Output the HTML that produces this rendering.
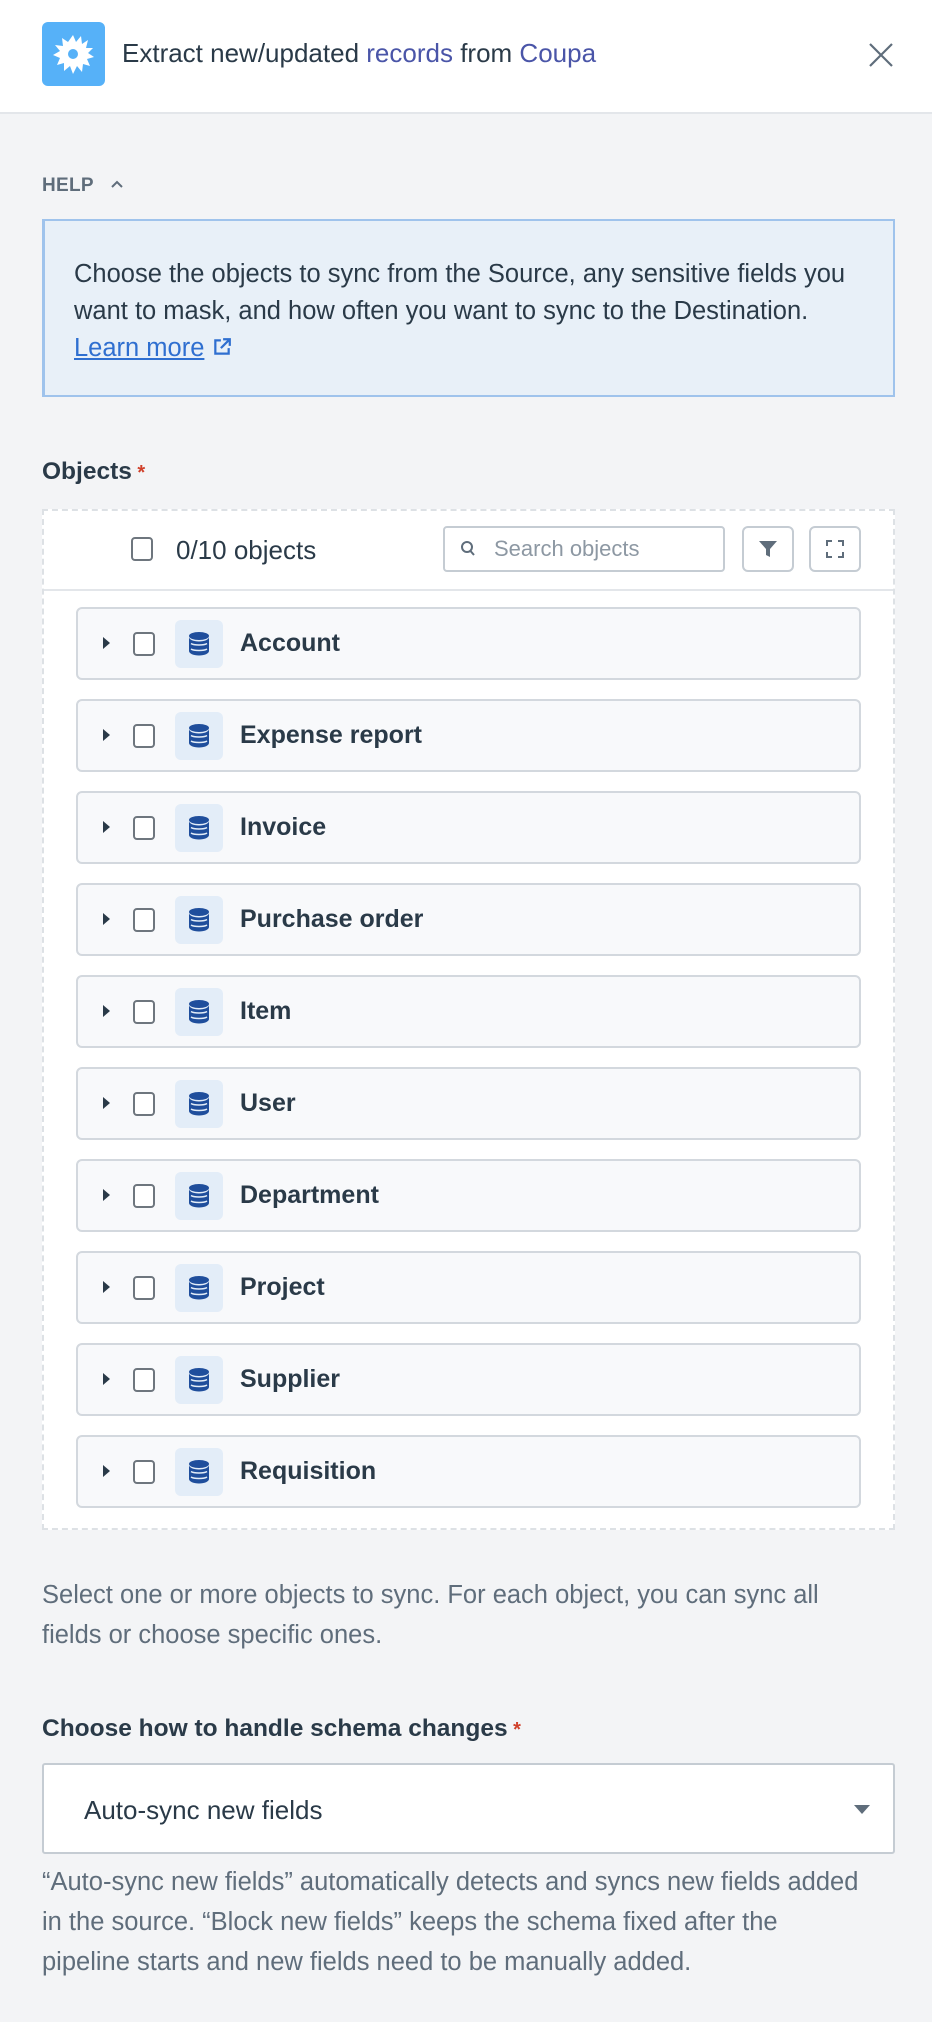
<!DOCTYPE html>
<html><head><meta charset="utf-8"><style>
*{box-sizing:border-box;margin:0;padding:0}
body{width:932px;height:2022px;background:#f3f4f6;font-family:"Liberation Sans",sans-serif;color:#2a3a48;position:relative;overflow:hidden}
.abs{position:absolute;white-space:nowrap}
.hdr{left:0;top:0;width:932px;height:114px;background:#fff;border-bottom:2px solid #e3e6ea}
.row{position:absolute;left:76px;width:785px;height:73px;background:#f8f9fb;border:2px solid #d3d8de;border-radius:6px}
.row .tri{position:absolute;left:25px;top:28px;width:0;height:0;border-left:7px solid #2a3a48;border-top:6px solid transparent;border-bottom:6px solid transparent}
.cb{position:absolute;width:22px;height:24px;border:2px solid #6e767e;border-radius:4px;background:#fff}
.row .cb{left:55px;top:23px}
.row .db{position:absolute;left:97px;top:11px;width:48px;height:48px;background:#e3edf8;border-radius:6px}
.row .db svg{position:absolute;left:13px;top:12px}
.row .lbl{position:absolute;left:162px;top:19px;font-size:25px;line-height:30px;font-weight:bold;color:#2a3a48}
.muted{color:#5f6d7b}
</style></head><body>
<div class="abs hdr"></div>
<div class="abs" style="left:42px;top:22px;width:63px;height:64px;background:#56b1f8;border-radius:6px">
<svg width="63" height="64" viewBox="0 0 63 64"><polygon fill="#fff" points="31,13 34,20 39,14 40,22 46,18 44,26 51,26 46,31 52,35 45,37 48,44 41,42 40,50 35,44 31,52 28,44 22,49 22,41 15,43 18,36 11,33 18,29 13,23 21,24 20,16 26,20" /><circle cx="31" cy="32" r="5" fill="#56b1f8"/></svg>
</div>
<div class="abs" style="left:122px;top:38px;font-size:26px;line-height:30px;color:#2a3a48">Extract new/updated <span style="color:#4a55a8">records</span> from <span style="color:#4a55a8">Coupa</span></div>
<svg class="abs" style="left:868px;top:42px" width="26" height="26" viewBox="0 0 26 26"><path d="M2 2L24 24M24 2L2 24" stroke="#5f6d7b" stroke-width="2.2"/></svg>

<div class="abs" style="left:42px;top:174px;font-size:19px;line-height:24px;font-weight:bold;color:#5f6d7b;letter-spacing:0.3px">HELP</div>
<svg class="abs" style="left:110px;top:179px" width="14" height="10" viewBox="0 0 14 10"><path d="M2 8L7 3L12 8" stroke="#5f6d7b" stroke-width="2" fill="none"/></svg>
<div class="abs" style="left:42px;top:219px;width:853px;height:178px;background:#e8f0f8;border:2px solid #9fc3ec;border-left-width:3px"></div>
<div class="abs" style="left:74px;top:256px;font-size:25.5px;line-height:37px;color:#2a3a48">Choose the objects to sync from the Source, any sensitive fields you<br>want to mask, and how often you want to sync to the Destination.<br><span style="color:#2f6fd0;text-decoration:underline">Learn more</span> <svg width="20" height="20" viewBox="0 0 18 18" style="vertical-align:-1px"><path d="M8 3H3V15H15V10M10 2H16V8M16 2L8 10" stroke="#2f6fd0" stroke-width="2" fill="none"/></svg></div>

<div class="abs" style="left:42px;top:457px;font-size:24.5px;line-height:30px;font-weight:bold;color:#2a3a48">Objects<span style="color:#d0402a;font-size:20px"> *</span></div>
<div class="abs" style="left:42px;top:509px;width:853px;height:1021px;background:#fff;border:2px dashed #dde1e5"></div>
<div class="abs" style="left:44px;top:589px;width:849px;height:2px;background:#e3e6ea"></div>
<div class="cb" style="left:131px;top:537px"></div>
<div class="abs" style="left:176px;top:535px;font-size:26px;line-height:30px;color:#2a3a48">0/10 objects</div>
<div class="abs" style="left:443px;top:526px;width:282px;height:46px;border:2px solid #c5ccd3;border-radius:4px;background:#fff"></div>
<svg class="abs" style="left:460px;top:540px" width="16" height="18" viewBox="0 0 16 18"><circle cx="7" cy="7" r="5" stroke="#5f6d7b" stroke-width="2" fill="none"/><path d="M10.5 11L14 15" stroke="#5f6d7b" stroke-width="2"/></svg>
<div class="abs" style="left:494px;top:535px;font-size:22px;line-height:28px;color:#8d98a3">Search objects</div>
<div class="abs" style="left:742px;top:526px;width:52px;height:46px;border:2px solid #c5ccd3;border-radius:6px;background:#fff"></div>
<svg class="abs" style="left:758px;top:539px" width="20" height="20" viewBox="0 0 20 20"><path d="M1 2H19L12 10V18L8 16V10Z" fill="#5f6d7b"/></svg>
<div class="abs" style="left:809px;top:526px;width:52px;height:46px;border:2px solid #c5ccd3;border-radius:6px;background:#fff"></div>
<svg class="abs" style="left:825px;top:539px" width="20" height="20" viewBox="0 0 20 20"><path d="M2 7V2H7M13 2H18V7M18 13V18H13M7 18H2V13" stroke="#5f6d7b" stroke-width="2" fill="none"/></svg>

<div class="row" style="top:607px"><div class="tri"></div><div class="cb"></div><div class="db"><svg width="22" height="24" viewBox="0 0 22 24"><ellipse cx="11" cy="4" rx="10" ry="4" fill="#1f4e9c"/><path d="M1 5V19C1 21.5 5.5 23.5 11 23.5S21 21.5 21 19V5C21 7.5 16.5 9.5 11 9.5S1 7.5 1 5Z" fill="#1f4e9c"/><path d="M3 11.5C6 13.5 16 13.5 19 11.5M3 17C6 19 16 19 19 17" stroke="#e3edf8" stroke-width="1.5" fill="none"/></svg></div><div class="lbl">Account</div></div>
<div class="row" style="top:699px"><div class="tri"></div><div class="cb"></div><div class="db"><svg width="22" height="24" viewBox="0 0 22 24"><ellipse cx="11" cy="4" rx="10" ry="4" fill="#1f4e9c"/><path d="M1 5V19C1 21.5 5.5 23.5 11 23.5S21 21.5 21 19V5C21 7.5 16.5 9.5 11 9.5S1 7.5 1 5Z" fill="#1f4e9c"/><path d="M3 11.5C6 13.5 16 13.5 19 11.5M3 17C6 19 16 19 19 17" stroke="#e3edf8" stroke-width="1.5" fill="none"/></svg></div><div class="lbl">Expense report</div></div>
<div class="row" style="top:791px"><div class="tri"></div><div class="cb"></div><div class="db"><svg width="22" height="24" viewBox="0 0 22 24"><ellipse cx="11" cy="4" rx="10" ry="4" fill="#1f4e9c"/><path d="M1 5V19C1 21.5 5.5 23.5 11 23.5S21 21.5 21 19V5C21 7.5 16.5 9.5 11 9.5S1 7.5 1 5Z" fill="#1f4e9c"/><path d="M3 11.5C6 13.5 16 13.5 19 11.5M3 17C6 19 16 19 19 17" stroke="#e3edf8" stroke-width="1.5" fill="none"/></svg></div><div class="lbl">Invoice</div></div>
<div class="row" style="top:883px"><div class="tri"></div><div class="cb"></div><div class="db"><svg width="22" height="24" viewBox="0 0 22 24"><ellipse cx="11" cy="4" rx="10" ry="4" fill="#1f4e9c"/><path d="M1 5V19C1 21.5 5.5 23.5 11 23.5S21 21.5 21 19V5C21 7.5 16.5 9.5 11 9.5S1 7.5 1 5Z" fill="#1f4e9c"/><path d="M3 11.5C6 13.5 16 13.5 19 11.5M3 17C6 19 16 19 19 17" stroke="#e3edf8" stroke-width="1.5" fill="none"/></svg></div><div class="lbl">Purchase order</div></div>
<div class="row" style="top:975px"><div class="tri"></div><div class="cb"></div><div class="db"><svg width="22" height="24" viewBox="0 0 22 24"><ellipse cx="11" cy="4" rx="10" ry="4" fill="#1f4e9c"/><path d="M1 5V19C1 21.5 5.5 23.5 11 23.5S21 21.5 21 19V5C21 7.5 16.5 9.5 11 9.5S1 7.5 1 5Z" fill="#1f4e9c"/><path d="M3 11.5C6 13.5 16 13.5 19 11.5M3 17C6 19 16 19 19 17" stroke="#e3edf8" stroke-width="1.5" fill="none"/></svg></div><div class="lbl">Item</div></div>
<div class="row" style="top:1067px"><div class="tri"></div><div class="cb"></div><div class="db"><svg width="22" height="24" viewBox="0 0 22 24"><ellipse cx="11" cy="4" rx="10" ry="4" fill="#1f4e9c"/><path d="M1 5V19C1 21.5 5.5 23.5 11 23.5S21 21.5 21 19V5C21 7.5 16.5 9.5 11 9.5S1 7.5 1 5Z" fill="#1f4e9c"/><path d="M3 11.5C6 13.5 16 13.5 19 11.5M3 17C6 19 16 19 19 17" stroke="#e3edf8" stroke-width="1.5" fill="none"/></svg></div><div class="lbl">User</div></div>
<div class="row" style="top:1159px"><div class="tri"></div><div class="cb"></div><div class="db"><svg width="22" height="24" viewBox="0 0 22 24"><ellipse cx="11" cy="4" rx="10" ry="4" fill="#1f4e9c"/><path d="M1 5V19C1 21.5 5.5 23.5 11 23.5S21 21.5 21 19V5C21 7.5 16.5 9.5 11 9.5S1 7.5 1 5Z" fill="#1f4e9c"/><path d="M3 11.5C6 13.5 16 13.5 19 11.5M3 17C6 19 16 19 19 17" stroke="#e3edf8" stroke-width="1.5" fill="none"/></svg></div><div class="lbl">Department</div></div>
<div class="row" style="top:1251px"><div class="tri"></div><div class="cb"></div><div class="db"><svg width="22" height="24" viewBox="0 0 22 24"><ellipse cx="11" cy="4" rx="10" ry="4" fill="#1f4e9c"/><path d="M1 5V19C1 21.5 5.5 23.5 11 23.5S21 21.5 21 19V5C21 7.5 16.5 9.5 11 9.5S1 7.5 1 5Z" fill="#1f4e9c"/><path d="M3 11.5C6 13.5 16 13.5 19 11.5M3 17C6 19 16 19 19 17" stroke="#e3edf8" stroke-width="1.5" fill="none"/></svg></div><div class="lbl">Project</div></div>
<div class="row" style="top:1343px"><div class="tri"></div><div class="cb"></div><div class="db"><svg width="22" height="24" viewBox="0 0 22 24"><ellipse cx="11" cy="4" rx="10" ry="4" fill="#1f4e9c"/><path d="M1 5V19C1 21.5 5.5 23.5 11 23.5S21 21.5 21 19V5C21 7.5 16.5 9.5 11 9.5S1 7.5 1 5Z" fill="#1f4e9c"/><path d="M3 11.5C6 13.5 16 13.5 19 11.5M3 17C6 19 16 19 19 17" stroke="#e3edf8" stroke-width="1.5" fill="none"/></svg></div><div class="lbl">Supplier</div></div>
<div class="row" style="top:1435px"><div class="tri"></div><div class="cb"></div><div class="db"><svg width="22" height="24" viewBox="0 0 22 24"><ellipse cx="11" cy="4" rx="10" ry="4" fill="#1f4e9c"/><path d="M1 5V19C1 21.5 5.5 23.5 11 23.5S21 21.5 21 19V5C21 7.5 16.5 9.5 11 9.5S1 7.5 1 5Z" fill="#1f4e9c"/><path d="M3 11.5C6 13.5 16 13.5 19 11.5M3 17C6 19 16 19 19 17" stroke="#e3edf8" stroke-width="1.5" fill="none"/></svg></div><div class="lbl">Requisition</div></div>

<div class="abs muted" style="left:42px;top:1575px;font-size:25.5px;line-height:40px">Select one or more objects to sync. For each object, you can sync all<br>fields or choose specific ones.</div>
<div class="abs" style="left:42px;top:1714px;font-size:24.5px;line-height:30px;font-weight:bold;color:#2a3a48">Choose how to handle schema changes<span style="color:#d0402a;font-size:20px"> *</span></div>
<div class="abs" style="left:42px;top:1763px;width:853px;height:91px;background:#fff;border:2px solid #c5ccd3;border-radius:3px"></div>
<div class="abs" style="left:84px;top:1795px;font-size:26px;line-height:30px;color:#2a3a48">Auto-sync new fields</div>
<div class="abs" style="left:854px;top:1805px;width:0;height:0;border-top:9px solid #5f6d7b;border-left:8px solid transparent;border-right:8px solid transparent"></div>
<div class="abs muted" style="left:42px;top:1862px;font-size:25.5px;line-height:40px">“Auto-sync new fields” automatically detects and syncs new fields added<br>in the source. “Block new fields” keeps the schema fixed after the<br>pipeline starts and new fields need to be manually added.</div>
</body></html>
